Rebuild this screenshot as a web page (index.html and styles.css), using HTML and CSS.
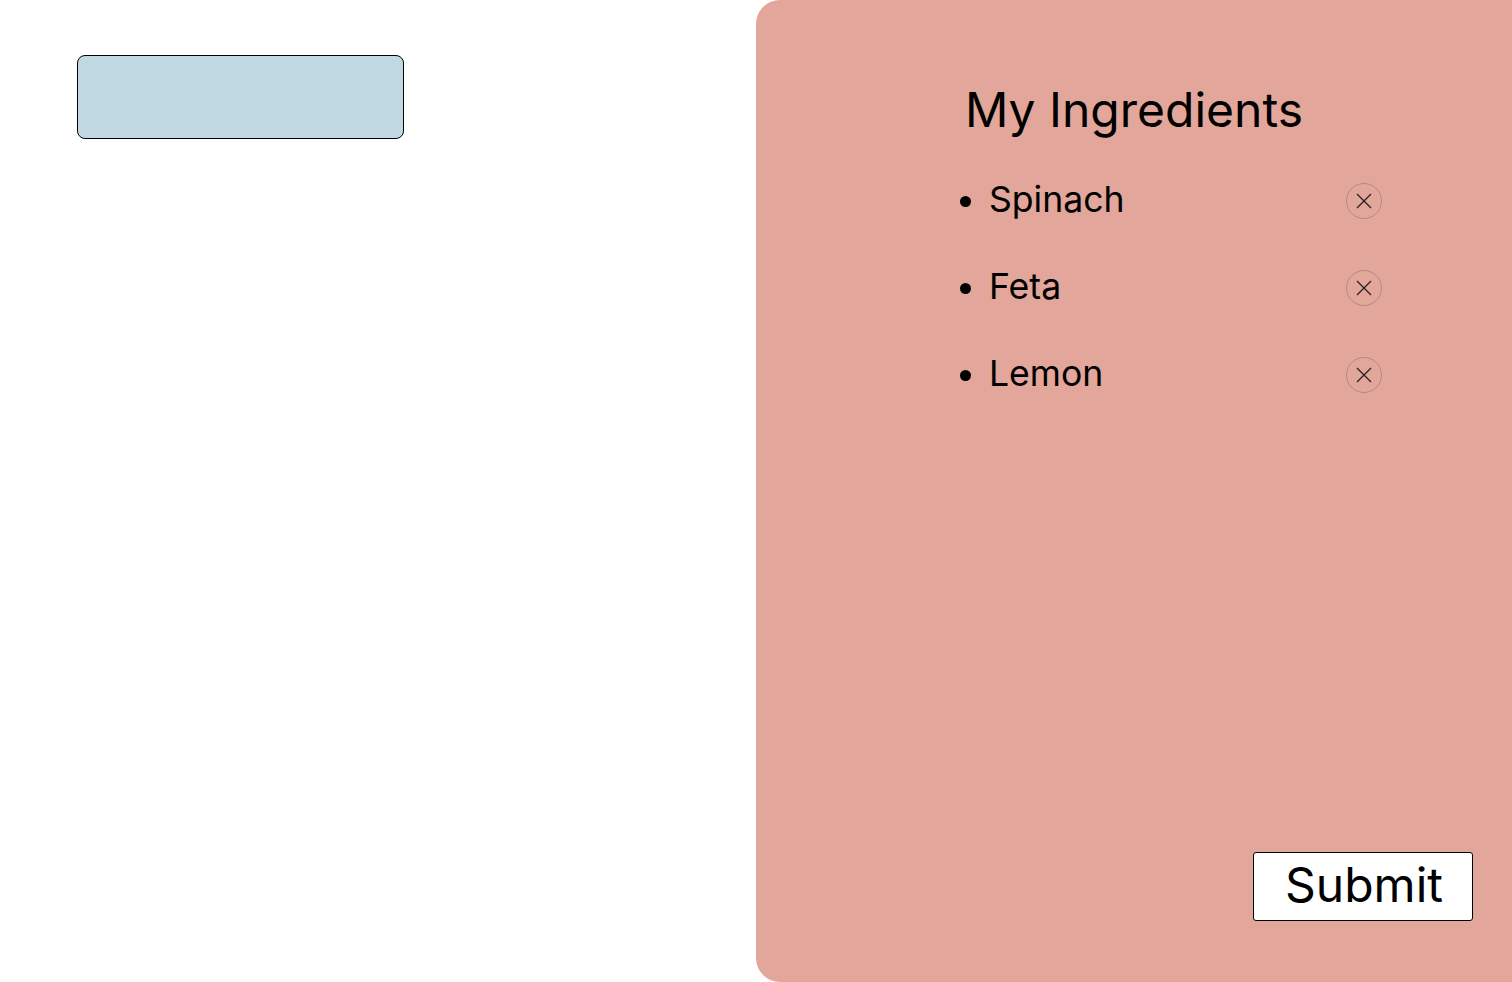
FILE: index.html
```html
<!DOCTYPE html>
<html>
<head>
<meta charset="utf-8">
<link rel="stylesheet" href="styles.css">
</head>
<body>
<div class="page">
  <div class="left">
    <div class="search-box"></div>
  </div>
  <div class="panel">
    <h1 class="title">My Ingredients</h1>
    <ul class="list">
      <li class="item"><span class="name">Spinach</span><button class="remove" aria-label="remove"><svg width="36" height="36" viewBox="0 0 36 36"><circle cx="18" cy="18" r="17.5" fill="none" stroke="#b08a86" stroke-width="1"/><path d="M11 11 L25 25 M25 11 L11 25" stroke="#222" stroke-width="1.3"/></svg></button></li>
      <li class="item"><span class="name">Feta</span><button class="remove" aria-label="remove"><svg width="36" height="36" viewBox="0 0 36 36"><circle cx="18" cy="18" r="17.5" fill="none" stroke="#b08a86" stroke-width="1"/><path d="M11 11 L25 25 M25 11 L11 25" stroke="#222" stroke-width="1.3"/></svg></button></li>
      <li class="item"><span class="name">Lemon</span><button class="remove" aria-label="remove"><svg width="36" height="36" viewBox="0 0 36 36"><circle cx="18" cy="18" r="17.5" fill="none" stroke="#b08a86" stroke-width="1"/><path d="M11 11 L25 25 M25 11 L11 25" stroke="#222" stroke-width="1.3"/></svg></button></li>
    </ul>
    <div class="actions">
      <button class="submit">Submit</button>
    </div>
  </div>
</div>
</body>
</html>
```
FILE: styles.css
```css
html, body {
  margin: 0;
  padding: 0;
  background: #fff;
  font-family: Inter, "Noto Sans", sans-serif;
}
.page {
  display: flex;
  width: 1512px;
  height: 982px;
}
.left {
  width: 756px;
  padding: 55px 0 0 77px;
  box-sizing: border-box;
}
.search-box {
  width: 325px;
  height: 82px;
  background: #c1d9e2;
  border: 1px solid #000;
  border-radius: 8px;
}
.panel {
  width: 756px;
  height: 982px;
  background: #e3a69a;
  border-radius: 24px 0 0 24px;
  display: flex;
  flex-direction: column;
  box-sizing: border-box;
  padding: 80px 39px 61px 0;
}
.title {
  margin: 0;
  font-weight: 400;
  font-size: 48px;
  line-height: 60px;
  text-align: center;
  padding-left: 39px;
  color: #000;
}
.list {
  margin: 39px 0 0 0;
  padding: 0 0 0 233px;
  list-style: disc;
}
.item {
  font-size: 35.6px;
  line-height: 41px;
  height: 41px;
  margin-bottom: 46px;
  width: 393px;
  display: list-item;
  position: relative;
}
.name {
  display: inline-block;
}
.remove {
  position: absolute;
  right: 0;
  top: 4px;
  width: 36px;
  height: 36px;
  padding: 0;
  border: 0;
  background: transparent;
  display: block;
}
.remove svg { display: block; }
.actions {
  margin-top: auto;
  display: flex;
  justify-content: flex-end;
}
.submit {
  width: 220px;
  height: 69px;
  background: #fff;
  border: 1px solid #000;
  border-radius: 3px;
  font-family: Inter, "Noto Sans", sans-serif;
  font-size: 48px;
  color: #000;
  padding: 0 0 3px 2px;
  line-height: 1;
}
```
